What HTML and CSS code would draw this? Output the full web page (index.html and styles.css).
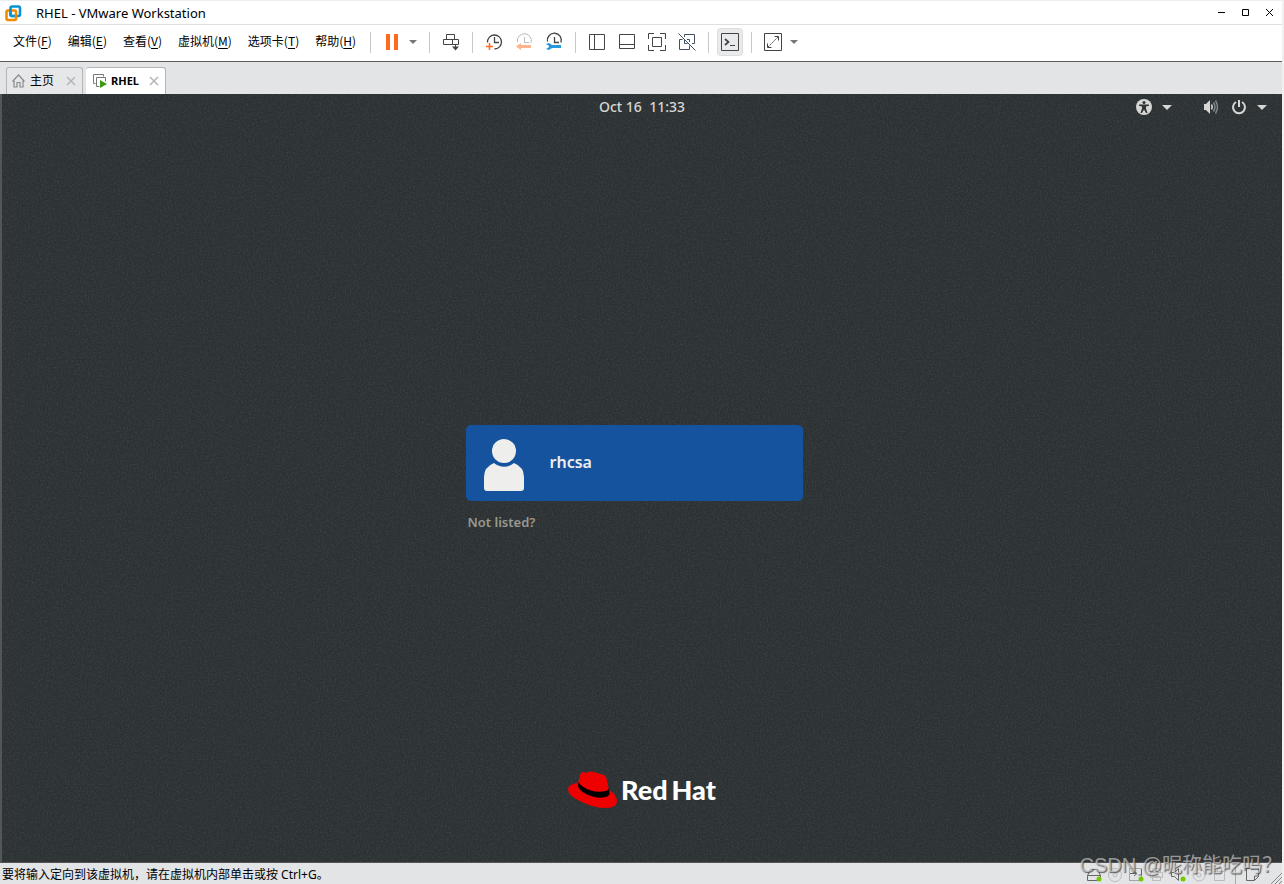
FILE: index.html
```html
<!DOCTYPE html>
<html lang="zh-CN">
<head>
<meta charset="utf-8">
<title>RHEL - VMware Workstation</title>
<link rel="stylesheet" href="styles.css">
</head>
<body>
<div class="window">
  <header class="titlebar">
    <svg class="app-logo" viewBox="0 0 18 18" fill="none" stroke-width="2.600"><rect x="6.500" y="2.500" width="9.500" height="9.500" rx="1.500" stroke="#0a94d3"/><rect x="2.500" y="6.500" width="9.500" height="9.500" rx="1.500" stroke="#f38b00"/><path d="M6.500 5v5.500a1.500 1.500 0 0 0 1.500 1.500h2.500" stroke="#0a94d3"/></svg>
    <h1 class="title">RHEL - VMware Workstation</h1>
    <div class="window-controls">
      <button aria-label="最小化"><svg viewBox="0 0 24 24"><path d="M8 11.500h7"/></svg></button>
      <button aria-label="最大化"><svg viewBox="0 0 24 24"><path d="M8.500 8.500h6v6h-6z"/></svg></button>
      <button aria-label="关闭"><svg viewBox="0 0 24 24"><path d="m8 8 7 7m0-7-7 7"/></svg></button>
    </div>
  </header>

  <div class="menubar">
    <nav class="menus">
      <button>文件(<u>F</u>)</button><button>编辑(<u>E</u>)</button><button>查看(<u>V</u>)</button><button>虚拟机(<u>M</u>)</button><button>选项卡(<u>T</u>)</button><button>帮助(<u>H</u>)</button>
    </nav>
    <div class="toolbar">
      <span class="sep"></span>
      <button class="tool" aria-label="挂起"><svg viewBox="0 0 30 30"><path d="M9 7h4v16H9zM17 7h4v16h-4z" fill="#ff6a1f" stroke="none"/></svg></button>
      <button class="caret wide" aria-label="电源选项"><svg viewBox="0 0 12 8"><path d="M2 2h8L6 6z"/></svg></button>
      <span class="sep"></span>
      <button class="tool" aria-label="发送 Ctrl+Alt+Del"><svg viewBox="0 0 30 30"><path d="M10.500 12.500v-5h8v5M7.500 12.500h15v5h-15zM16.500 12.500v5M19.500 17v5"/><path d="M16 19.500h7l-3.500 4z" fill="#444" stroke="none"/></svg></button>
      <span class="sep"></span>
      <button class="tool" aria-label="拍摄快照"><svg viewBox="0 0 30 30"><path d="M8.500 15.500a7 7 0 1 1 7 6.500M15.500 10v5.500H20" stroke-width="1.300"/><path d="M7 19.500h7M10.500 16v7" stroke="#ff6a1f" stroke-width="1.500"/></svg></button>
      <button class="tool" aria-label="恢复快照"><svg viewBox="0 0 30 30"><path d="M8.500 15a7 7 0 1 1 13.500 1M15.500 10v5.500H20" stroke="#bbb"/><path d="M7 19.500l5-3.500v2h10v3H12v2z" fill="#ffb28c" stroke="none"/></svg></button>
      <button class="tool" aria-label="管理快照"><svg viewBox="0 0 30 30"><path d="M8.500 14.500a7 7 0 1 1 13.500 1M15.500 10v5.500H20" stroke-width="1.300"/><path d="M7 17l3-1 3 2h9v3h-9l-3 2-3-1 3-2v-1z" fill="#2799dc" stroke="none"/></svg></button>
      <span class="sep"></span>
      <button class="tool" aria-label="显示库"><svg viewBox="0 0 30 30"><path d="M7.500 7.500h15v15h-15zM12.500 7.500v15"/></svg></button>
      <button class="tool" aria-label="显示缩略图"><svg viewBox="0 0 30 30"><path d="M7.500 7.500h15v14h-15zM7.500 17.500h15"/></svg></button>
      <button class="tool" aria-label="全屏"><svg viewBox="0 0 30 30"><path d="M6.500 12V6.500H12M18 6.500h5.500V12M23.500 18v5.500H18M12 23.500H6.500V18M10.500 10.500h9v9h-9z"/></svg></button>
      <button class="tool" aria-label="Unity 模式"><svg viewBox="0 0 30 30"><path d="M12.500 10V7.500h10v9H20M7.500 12.500v10h10v-4M7.500 12.500h3M15 12.500h2.500V15M12.500 13v3.500h3M6.500 6.500l17 17" stroke="#435062"/></svg></button>
      <span class="sep"></span>
      <button class="tool" aria-label="控制台视图" aria-pressed="true"><svg viewBox="0 0 30 30"><rect x="2.500" y="1.500" width="25" height="27" rx="3" fill="#e9eaeb" stroke="#ddd"/><path d="M6.500 6.500h17v17h-17zM15 18.500h5"/><path d="M10 12l3.500 3-3.500 3" stroke-width="1.700"/></svg></button>
      <span class="sep"></span>
      <button class="tool" aria-label="自由拉伸"><svg viewBox="0 0 30 30"><path d="M6.500 6.500h17v17h-17zM16.500 9.500h4v4M9.500 16.500v4h4"/><path d="M10 20L20 10" stroke-dasharray="2 1"/></svg></button>
      <button class="caret" aria-label="拉伸选项"><svg viewBox="0 0 12 8"><path d="M2 2h8L6 6z"/></svg></button>
    </div>
  </div>

  <div class="tabs">
    <div class="tab">
      <svg class="tab-icon" viewBox="0 0 16 16" fill="none" stroke="#8b8b8b" stroke-width="1.200"><path d="M1.500 8.500l6-6.500 6 6.500M3 7.500v6.500h3V9.500h3V14h3V7.500"/></svg>
      <a href="#home">主页</a>
      <button aria-label="关闭主页"><svg viewBox="0 0 10 10"><path d="m1 1 8 8m0-8-8 8"/></svg></button>
    </div>
    <div class="tab current">
      <svg class="tab-icon" viewBox="0 0 16 16" fill="none" stroke="#777"><path d="M3.500 10.500h-2v-9h10v2M7.500 13.500h-3v-9h9v4"/><path d="M8 7v8l7-4z" fill="#3f9c12" stroke="none"/></svg>
      <a href="#rhel">RHEL</a>
      <button aria-label="关闭 RHEL"><svg viewBox="0 0 10 10"><path d="m1 1 8 8m0-8-8 8"/></svg></button>
    </div>
  </div>

  <main class="guest">
    <svg class="grain" aria-hidden="true"><filter id="grain"><feTurbulence type="fractalNoise" baseFrequency="0.6" numOctaves="2" seed="4"/><feColorMatrix values="0 0 0 0 1  0 0 0 0 1  0 0 0 0 1  0.14 0 0 0 -0.055"/></filter><rect width="100%" height="100%" filter="url(#grain)"/></svg>
    <div class="topbar">
      <time class="clock">Oct 16&nbsp; 11:33</time>
      <div class="system">
        <button aria-label="Accessibility">
          <svg class="sys-icon" viewBox="0 0 16 16"><circle cx="8" cy="8" r="8" fill="#d6d6d4"/><circle cx="8" cy="3.500" r="1.500" fill="#2e3436"/><path d="M3 5.500h10v1.200l-3 .8v2l1.500 4.500h-1.500L8 10.500 6 14H4.500L6 9.500v-2l-3-.8z" fill="#2e3436"/></svg>
          <svg class="arrow" viewBox="0 0 10 6"><path d="M0 1h10L5 6z" fill="#d6d6d4"/></svg>
        </button>
        <button class="power" aria-label="System menu">
          <svg class="sys-icon" viewBox="0 0 16 16"><path d="M1 5h2l4-4v14l-4-4H1z" fill="#d6d6d4"/><path d="M8.500 5.500q1.500 2.500 0 5" stroke="#d6d6d4" stroke-width="1.500" fill="none"/><path d="M10.500 3.500q3 4.500 0 9M12.500 1.500q4 6.500 0 13" fill="none" stroke="#80868a" stroke-width="1.500"/></svg>
          <svg class="sys-icon" viewBox="0 0 16 16"><path d="M5 3a6 6 0 1 0 6 0M8 1v7" fill="none" stroke="#d6d6d4" stroke-width="2"/></svg>
          <svg class="arrow" viewBox="0 0 10 6"><path d="M0 1h10L5 6z" fill="#d6d6d4"/></svg>
        </button>
      </div>
    </div>
    <div class="login">
      <button class="user">
        <svg class="avatar" viewBox="0 0 40 52" fill="#eeeeec"><circle cx="20" cy="12" r="12"/><path d="M10 24q10 7.500 20 0 10 4 10 14v11q0 3-3 3H3q-3 0-3-3V38q0-10 10-14z"/></svg>
        <span>rhcsa</span>
      </button>
      <button class="not-listed">Not listed?</button>
    </div>
    <div class="brand">
      <svg class="hat" viewBox="0 0 49 38"><path d="M10 12 12.500 3Q13.500 0 17 1.500q2 .8 4-.7Q24-.3 28 1.800L36 4q2 .8 2.500 3.500L41 19q8 5 8 11 0 7-11 7Q26 37 14 31 0 25 0 18.500 0 13 10 12z" fill="#e00"/><path d="M11 10q-1 2 3 5 11 8 24 5 3-1 3-3l.5 5q0 3-4 4-11 2.500-23-5-5-4-4.500-7z"/></svg>
      <span>Red</span><span>Hat</span>
    </div>
  </main>

  <footer class="status">
    <span>要将输入定向到该虚拟机，请在虚拟机内部单击或按 Ctrl+G。</span>
    <div class="devices">
      <svg viewBox="0 0 21 18"><path d="M4.500 9.500l3-6h7l3 6M4.500 9.500h13v5h-13z"/><circle class="led" cx="16" cy="13" r="2.500"/></svg>
      <svg class="off" viewBox="0 0 21 18"><circle cx="11" cy="9" r="6.500"/><circle cx="11" cy="9" r="2"/></svg>
      <svg viewBox="0 0 21 18"><path d="M4.500 2.500h12v12h-12z" stroke-dasharray="1 1"/><path d="M5 7.500h6M9 5l3 2.500L9 10M16.500 3v6h-3"/><circle class="led" cx="16" cy="13" r="2.500"/></svg>
      <svg class="off" viewBox="0 0 21 18"><path d="M6.500 6.500v-4h8v4M4.500 6.500h12v5h-12zM6.500 10.500h8v4h-8z"/></svg>
      <svg viewBox="0 0 21 18"><path d="M4.500 6.500h3l4-4v12l-4-4h-3z"/><circle class="led" cx="16" cy="13" r="2.500"/></svg>
      <svg class="off" viewBox="0 0 21 18"><circle cx="11" cy="9" r="6"/><circle cx="11" cy="9" r="2"/></svg>
      <svg class="off" viewBox="0 0 21 18"><path d="M5.500 5.500h10v9h-10zM8.500 5.500v-3h4v3"/></svg>
      <span class="divider"></span>
      <svg viewBox="0 0 21 18"><path d="M5.500 2.500h12v8l-4 4h-8zM13.500 14v-4h4"/></svg>
      <svg class="grip" viewBox="0 0 12 12"><path d="M1 12 12 1M5 12l7-7M9 12l3-3"/></svg>
    </div>
    <span class="watermark">CSDN @昵称能吃吗？</span>
  </footer>
</div>
</body>
</html>
```
FILE: styles.css
```css
* { box-sizing: border-box; }
body { margin: 0; font: 12px/16px "Noto Sans", "Noto Sans CJK SC", sans-serif; color: #000; }
button { margin: 0; padding: 0; border: 0; background: none; font: inherit; color: inherit; }
a { color: inherit; text-decoration: none; }
svg { display: block; flex: none; }

.window { min-height: 100vh; display: flex; flex-direction: column; background: #fff; border-top: 1px solid #eee; border-right: 2px solid #f0f0f0; }

.titlebar { height: 24px; display: flex; align-items: center; border-bottom: 1px solid #dfdfdf; padding-left: 4px; }
.app-logo { width: 18px; height: 18px; }
.title { margin: 0 0 0 14px; flex: 1; font-size: 13px; font-weight: 400; }
.window-controls { display: flex; }
.window-controls svg { width: 24px; height: 24px; fill: none; stroke: #000; }

.menubar { height: 36px; display: flex; align-items: center; padding-bottom: 2px; }
.menus { display: flex; gap: 16px; padding: 0 0 2px 13px; font-family: "Noto Sans CJK SC", sans-serif; white-space: nowrap; }
.menus u { text-underline-offset: 2px; }
.toolbar { display: flex; align-items: center; margin-left: 8px; }
.sep { width: 1px; height: 21px; margin: 0 6px; background: #c8c8c8; }
.tool svg { width: 30px; height: 30px; fill: none; stroke: #444; }
.caret svg { width: 12px; height: 8px; fill: #777; }
.caret.wide { padding-right: 4px; }

.tabs { height: 33px; display: flex; align-items: flex-end; gap: 3px; padding-left: 6px; background: #e3e4e6; border-top: 1px solid #5d5b5f; }
.tab { height: 27px; display: flex; align-items: center; padding: 0 6px 0 4px; border: 1px solid #b5b5b5; border-bottom: 0; border-radius: 3px 3px 0 0; width: 77px; background: #e6e7e8; }
.tab.current { width: 80px; padding-left: 6px; border-left: 0; background: #fff; font-weight: 700; font-size: 11px; }
.tab-icon { width: 16px; height: 16px; margin-right: 3px; }
.tab button { margin-left: auto; }
.tab button svg { width: 10px; height: 10px; fill: none; stroke: #b5b5b5; stroke-width: 1.5; }

.guest { flex: 1; position: relative; display: flex; flex-direction: column; align-items: center; background: #2c3234; border-left: 2px solid #555; border-bottom: 1px solid #555; color: #d6d6d4; }
.grain { position: absolute; inset: 0; width: 100%; height: 100%; }
.topbar { position: relative; width: 100%; height: 26px; display: grid; grid-template-columns: 1fr auto 1fr; align-items: center; }
.clock { grid-column: 2; font: 500 14px/20px "Noto Sans", sans-serif; }
.system { display: flex; justify-content: flex-end; gap: 31px; padding-right: 15px; }
.system button { display: flex; align-items: center; gap: 10px; }
.system .power { gap: 12px; }
.system .power .arrow { margin-left: -2px; }
.sys-icon { width: 16px; height: 16px; }
.arrow { width: 10px; height: 6px; }

.login { position: relative; width: 337px; margin: auto 16px auto 0; padding-top: 65px; }
.user { width: 100%; height: 76px; display: flex; align-items: center; gap: 26px; padding: 4px 18px 0; border-radius: 5px; background: #15539e; color: #eeeeec; font: 600 16px/22px "Noto Sans", sans-serif; }
.user span { padding-bottom: 6px; }
.avatar { width: 40px; height: 52px; }
.not-listed { display: block; margin: 12px 0 0 2px; color: #99998f; font: 600 13px/18px "Noto Sans", sans-serif; }
.brand { position: relative; display: flex; align-items: center; gap: 4px; margin-bottom: 53px; color: #fff; font: 900 27px/38px Lato, sans-serif; }
.hat { width: 49px; height: 38px; }

.status { position: relative; height: 21px; display: flex; align-items: center; justify-content: space-between; padding: 2px 0 0 2px; background: #e3e4e6; white-space: nowrap; }
.devices { display: flex; align-items: center; }
.devices svg { width: 21px; height: 18px; fill: none; stroke: #666; }
.devices .off { stroke: #bbb; }
.devices .led { fill: #73c800; stroke: none; }
.devices .divider { width: 1px; height: 18px; margin: 0 5px; background: #aaa; }
.devices .grip { width: 12px; height: 12px; margin: 6px 0 0 8px; stroke: #888; }
.watermark { position: absolute; right: 0; bottom: 6px; font: 20px/26px "Liberation Sans", "Noto Sans CJK SC", sans-serif; color: rgb(210 210 210 / 65%); text-shadow: 1px 1px 1px rgb(60 60 60 / 80%); }
```
